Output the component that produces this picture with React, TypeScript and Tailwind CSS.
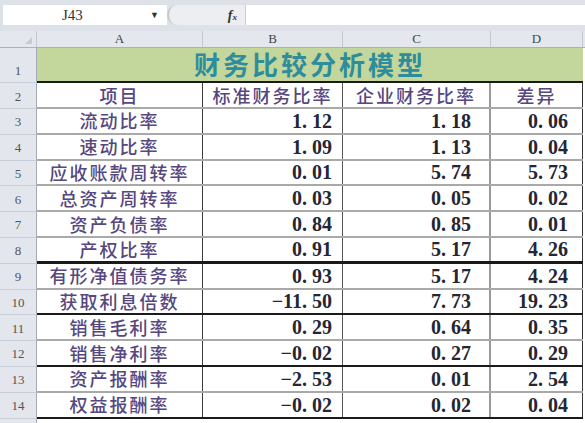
import React from "react";

const rows = [
  { name: "流动比率", b: "1.12", c: "1.18", d: "0.06", line: "gray" },
  { name: "速动比率", b: "1.09", c: "1.13", d: "0.04", line: "gray" },
  { name: "应收账款周转率", b: "0.01", c: "5.74", d: "5.73", line: "gray" },
  { name: "总资产周转率", b: "0.03", c: "0.05", d: "0.02", line: "gray" },
  { name: "资产负债率", b: "0.84", c: "0.85", d: "0.01", line: "gray" },
  { name: "产权比率", b: "0.91", c: "5.17", d: "4.26", line: "double" },
  { name: "有形净值债务率", b: "0.93", c: "5.17", d: "4.24", line: "gray" },
  { name: "获取利息倍数", b: "−11.50", c: "7.73", d: "19.23", line: "black" },
  { name: "销售毛利率", b: "0.29", c: "0.64", d: "0.35", line: "gray" },
  { name: "销售净利率", b: "−0.02", c: "0.27", d: "0.29", line: "black" },
  { name: "资产报酬率", b: "−2.53", c: "0.01", d: "2.54", line: "gray" },
  { name: "权益报酬率", b: "−0.02", c: "0.02", d: "0.04", line: "black" },
];

const lineClass: Record<string, string> = {
  gray: "border-b-2 border-[#a9a9a9]",
  black: "border-b-2 border-[#1a1a1a]",
  double: "border-b-[3px] border-[#1a1a1a]",
};

const cjk = "font-['Noto_Sans_CJK_SC',sans-serif]";
const label = `${cjk} font-medium text-[18px] tracking-[2px] text-[#56477f]`;

function Num({ v }: { v: string }) {
  const [i, d] = v.split(".");
  return (
    <span className="font-['Liberation_Serif',serif] font-bold text-[20px] text-[#262633] leading-none">
      {i}
      <span className="mr-[5px]">.</span>
      {d}
    </span>
  );
}

function RowHead({ n, h }: { n: string; h: string }) {
  return (
    <div
      className={`w-[37px] shrink-0 ${h} bg-[#e3e7ed] border-r border-[#a2abb7] border-b border-b-[#c7cdd6] flex items-end justify-center pb-[2px] text-[13px] text-[#555] font-['Liberation_Serif',serif]`}
    >
      {n}
    </div>
  );
}

export default function App() {
  return (
    <div className="w-[585px] h-[423px] overflow-hidden bg-white select-none">
      {/* formula bar */}
      <div className="h-[31px] bg-[#dde2e8] flex pt-[5px] pb-[6px] pl-[3px]">
        <div className="w-[164px] bg-white flex items-center">
          <span className="ml-[59px] font-['Liberation_Serif',serif] text-[15px] text-[#333]">J43</span>
          <span className="ml-auto mr-[8px] text-[9px] text-[#333]">▼</span>
        </div>
        <div className="w-[78px] bg-[#eceef1] rounded-l-[10px] border-l-2 border-[#c3c8cf] flex items-center justify-end pr-[8px]">
          <span className="font-['Liberation_Serif',serif] italic font-bold text-[14px] text-[#333]">
            f<span className="text-[9px]">x</span>
          </span>
        </div>
        <div className="flex-1 bg-white border-l border-[#c9ced6]" />
      </div>

      {/* column headers */}
      <div className="flex h-[17px] bg-[#e4e8ee] border-b border-[#a9b1bd] text-[13px] text-[#444] font-['Liberation_Serif',serif]">
        <div className="w-[37px] border-r border-[#c3c9d2] relative">
          <span className="absolute right-[4px] bottom-[3px] w-0 h-0 border-l-[7px] border-l-transparent border-b-[7px] border-b-[#c8ccd2]" />
        </div>
        <div className="w-[166px] border-r border-[#c3c9d2] flex items-center justify-center">A</div>
        <div className="w-[140px] border-r border-[#c3c9d2] flex items-center justify-center">B</div>
        <div className="w-[148px] border-r border-[#c3c9d2] flex items-center justify-center">C</div>
        <div className="w-[92px] border-r border-[#c3c9d2] flex items-center justify-center">D</div>
        <div className="flex-1" />
      </div>

      {/* row 1 title */}
      <div className="flex">
        <RowHead n="1" h="h-[35px]" />
        <div className="w-[546px] h-[35px] bg-[#c3d69b] border-b-2 border-[#1a1a1a] flex items-end justify-center pb-[1px]">
          <span className={`${cjk} font-semibold text-[26px] tracking-[3px] text-[#2f8c9c] leading-none pb-[3px]`}>
            财务比较分析模型
          </span>
        </div>
        <div className="flex-1 bg-white" />
      </div>

      {/* row 2 header */}
      <div className="flex">
        <RowHead n="2" h="h-[26px]" />
        <div className="flex h-[26px] border-b-2 border-[#a9a9a9]">
          <div className={`w-[166px] border-r border-[#3a3a3a] flex items-center justify-center ${label}`}>项目</div>
          <div className={`w-[140px] border-r border-[#555] flex items-center justify-center ${label}`}>标准财务比率</div>
          <div className={`w-[148px] border-r-2 border-[#9a9a9a] flex items-center justify-center ${label}`}>企业财务比率</div>
          <div className={`w-[92px] border-r border-[#333] flex items-center justify-center ${label}`}>差异</div>
        </div>
        <div className="flex-1 bg-white" />
      </div>

      {rows.map((r, i) => (
        <div key={i} className="flex">
          <RowHead n={String(i + 3)} h="h-[25.8px]" />
          <div className={`flex h-[25.8px] ${lineClass[r.line]}`}>
            <div className={`w-[166px] border-r border-[#3a3a3a] flex items-center justify-center ${label}`}>
              {r.name}
            </div>
            <div className="w-[140px] border-r border-[#555] flex items-center justify-end pr-[10px]">
              <Num v={r.b} />
            </div>
            <div className="w-[148px] border-r-2 border-[#9a9a9a] flex items-center justify-end pr-[18px]">
              <Num v={r.c} />
            </div>
            <div className="w-[92px] border-r border-[#333] flex items-center justify-end pr-[14px]">
              <Num v={r.d} />
            </div>
          </div>
          <div className="flex-1 bg-white" />
        </div>
      ))}

      <div className="flex">
        <div className="w-[37px] h-[26px] bg-[#e3e7ed] border-r border-[#a2abb7]" />
        <div className="flex-1" />
      </div>
    </div>
  );
}
